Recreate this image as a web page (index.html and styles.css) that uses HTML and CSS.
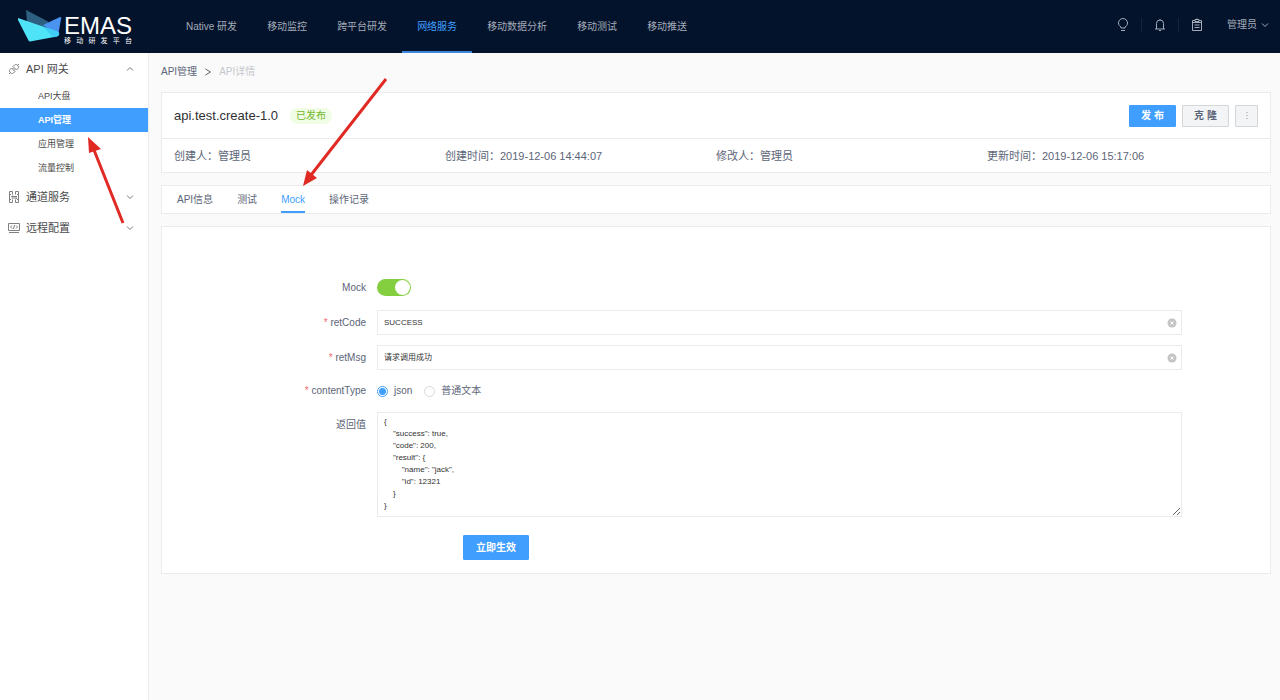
FILE: index.html
```html
<!DOCTYPE html>
<html lang="zh-CN">
<head>
<meta charset="utf-8">
<meta name="viewport" content="width=device-width, initial-scale=1">
<title>EMAS 移动研发平台</title>
<link rel="stylesheet" href="styles.css">
</head>
<body>
<header class="topbar">
  <a class="brand" href="#">
    <svg class="brand-mark" viewBox="0 0 44 34" aria-hidden="true">
      <path d="M8 0Q9 0 10 1L31 12 26 18 9 12Z" fill="#2c5f80"/>
      <path d="M42 7Q44 7 43 9L40 26 25 15Z" fill="#4a93f0"/>
      <path d="M0 8 38 21Q42 22 41 25L39 26.500 12 31.500Q11 31.500 10.500 30.500L0 10Z" fill="#4fe3f7"/>
      <path d="M25 16.500 38 21Q42 22 41 25L39 26.500 35 27.300Z" fill="#3fcdf5"/>
    </svg>
    <span class="brand-text">
      <span class="brand-name">EMAS</span>
      <span class="brand-sub">移动研发平台</span>
    </span>
  </a>
  <nav class="topnav">
    <a href="#">Native 研发</a>
    <a href="#">移动监控</a>
    <a href="#">跨平台研发</a>
    <a href="#" class="active">网络服务</a>
    <a href="#">移动数据分析</a>
    <a href="#">移动测试</a>
    <a href="#">移动推送</a>
  </nav>
  <div class="tools">
    <button class="tool" aria-label="提示"><svg viewBox="0 0 14 14"><path d="M5 10V9C3.500 8 2.500 7 2.500 5a4.500 4.500 0 0 1 9 0c0 2-1 3-2.500 4v1ZM5 12.500h4"/></svg></button>
    <button class="tool" aria-label="通知"><svg viewBox="0 0 14 14"><path d="M3.500 11V5.500a3.500 3.500 0 0 1 7 0V11M2 11h10M7 2V1M6 12.500h2"/></svg></button>
    <button class="tool" aria-label="任务"><svg viewBox="0 0 14 14"><path d="M5 2.500H2.500v10h9v-10H9M5 1.500h4v2H5ZM2.500 4.500h9M4.500 7h5M4.500 9.500h5M7 .5v1"/></svg></button>
    <button class="user">管理员<svg class="chev" viewBox="0 0 8 8"><path d="M1 2.500 4 5.500 7 2.500"/></svg></button>
  </div>
</header>
<div class="shell">
  <aside class="sidebar">
    <button class="group">
      <svg class="group-icon" viewBox="0 0 12 12"><path d="M1 11 2.500 9.500M3.500 5 7 8.500 5.500 10C4.500 11 3.300 10.600 2.400 9.700S1 7.500 2 6.500ZM5 3.500 6.500 2C7.500 1 8.700 1.400 9.600 2.300S11 4.500 10 5.500L8.500 7ZM9.500 2.500 11 1M4.500 6 5.700 4.800M6 7.500 7.200 6.300"/></svg>
      <span>API 网关</span>
      <svg class="chev" viewBox="0 0 8 8"><path d="M1 5.500 4 2.500 7 5.500"/></svg>
    </button>
    <nav class="submenu">
      <a href="#">API大盘</a>
      <a href="#" class="active">API管理</a>
      <a href="#">应用管理</a>
      <a href="#">流量控制</a>
    </nav>
    <button class="group">
      <svg class="group-icon" viewBox="0 0 12 12"><path d="M4.500.5h-3v11h3v-3M4.500.5v3M7.500 11.500h3V.5h-3v3M7.500 8.500v3M1.500 3.500h1.500M9 3.500h1.500M1.500 8.500h1.500M9 8.500h1.500M3.500 5.500H9M4.500 4.500 3.500 5.500M3.500 7H9L7.800 8.200"/></svg>
      <span>通道服务</span>
      <svg class="chev" viewBox="0 0 8 8"><path d="M1 2.500 4 5.500 7 2.500"/></svg>
    </button>
    <button class="group">
      <svg class="group-icon" viewBox="0 0 12 12"><path d="M.5 1.500h11v7H.5ZM1 10.500h10M4 3.500 2.500 5 4 6.500M8 3.500 9.500 5 8 6.500M6.600 3 5.400 7"/></svg>
      <span>远程配置</span>
      <svg class="chev" viewBox="0 0 8 8"><path d="M1 2.500 4 5.500 7 2.500"/></svg>
    </button>
  </aside>
  <main class="main">
    <nav class="crumbs">
      <a href="#">API管理</a>
      <svg class="crumb-sep" viewBox="0 0 8 8"><path d="M1.500 1 6.500 4 1.500 7"/></svg>
      <span>API详情</span>
    </nav>
    <section class="card">
      <div class="card-head">
        <h1>api.test.create-1.0</h1>
        <span class="badge">已发布</span>
        <div class="actions">
          <button class="btn primary">发 布</button>
          <button class="btn">克 隆</button>
          <button class="btn more" aria-label="更多"><svg viewBox="0 0 4 10"><path d="M1.500 1h1v1h-1zM1.500 4h1v1h-1zM1.500 7h1v1h-1z"/></svg></button>
        </div>
      </div>
      <div class="info">
        <span>创建人：管理员</span>
        <span>创建时间：2019-12-06 14:44:07</span>
        <span>修改人：管理员</span>
        <span>更新时间：2019-12-06 15:17:06</span>
      </div>
    </section>
    <nav class="card tabs">
      <a href="#">API信息</a>
      <a href="#">测试</a>
      <a href="#" class="active">Mock</a>
      <a href="#">操作记录</a>
    </nav>
    <form class="card form">
      <label class="label" for="mock">Mock</label>
      <div class="field"><input class="switch" type="checkbox" id="mock" checked></div>

      <label class="label required" for="code">retCode</label>
      <div class="field box">
        <input class="text" id="code" type="text" value="SUCCESS">
        <button class="clear" type="button" aria-label="清除"><svg viewBox="0 0 10 10"><circle cx="5" cy="5" r="4.500"/><path d="M3.500 3.500 6.500 6.500M6.500 3.500 3.500 6.500"/></svg></button>
      </div>

      <label class="label required" for="msg">retMsg</label>
      <div class="field box">
        <input class="text" id="msg" type="text" value="请求调用成功">
        <button class="clear" type="button" aria-label="清除"><svg viewBox="0 0 10 10"><circle cx="5" cy="5" r="4.500"/><path d="M3.500 3.500 6.500 6.500M6.500 3.500 3.500 6.500"/></svg></button>
      </div>

      <span class="label required" id="ctype">contentType</span>
      <div class="field radios" role="radiogroup" aria-labelledby="ctype">
        <label><input type="radio" name="ctype" checked>json</label>
        <label><input type="radio" name="ctype">普通文本</label>
      </div>

      <label class="label" for="result">返回值</label>
      <textarea class="area" id="result">{
    "success": true,
    "code": 200,
    "result": {
        "name": "jack",
        "id": 12321
    }
}</textarea>

      <div class="submit"><button class="btn primary large" type="button">立即生效</button></div>
    </form>
  </main>
</div>
<svg class="marks" width="400" height="240" viewBox="0 0 400 240" aria-hidden="true">
  <path class="shaft" d="M386 79 311 175M123 223 94 150"/>
  <path class="head" d="M303 186 307 170 317 178ZM88 137 89 153 101 149Z"/>
</svg>
</body>
</html>
```
FILE: styles.css
```css
* { box-sizing: border-box; }

body {
  margin: 0;
  min-height: 100vh;
  display: flex;
  flex-direction: column;
  background: #fafafa;
  color: #5c6577;
  font: 10px/16px "Liberation Sans", "Noto Sans CJK SC", sans-serif;
}

a { color: inherit; text-decoration: none; }
button, input, textarea { font: inherit; color: inherit; margin: 0; }
button { border: 0; padding: 0; background: none; cursor: pointer; }
svg { fill: none; stroke: currentColor; flex: none; }

.topbar {
  display: flex;
  align-items: stretch;
  height: 53px;
  background: #03132c;
  color: #a3abb8;
}

.brand {
  display: flex;
  align-items: center;
  width: 171px;
  padding-left: 18px;
  gap: 2px;
  color: #fff;
}
.brand-mark { width: 44px; height: 34px; stroke: none; }
.brand-text { display: flex; flex-direction: column; padding-top: 6px; }
.brand-name { font-size: 24px; line-height: 22px; }
.brand-sub { font-size: 7px; line-height: 8px; text-align-last: justify; }

.topnav { display: flex; }
.topnav a {
  display: flex;
  align-items: center;
  padding: 2px 15px 0;
  border-bottom: 2px solid transparent;
}
.topnav .active { color: #409eff; border-color: #3c86dc; }

.tools { display: flex; align-items: center; margin-left: auto; padding: 0 11px 3px 0; }
.tool {
  display: flex;
  justify-content: center;
  width: 37px;
  height: 14px;
}
.tool + .tool { border-left: 1px solid #14243b; }
.tool svg { width: 14px; height: 14px; }
.user { display: flex; align-items: center; gap: 4px; padding-left: 12px; }
.chev { width: 8px; height: 8px; }

.shell { display: flex; flex: 1; }

.sidebar {
  width: 149px;
  flex: none;
  background: #fff;
  border-right: 1px solid #ebebeb;
  color: #4a4a4a;
}
.group {
  display: flex;
  align-items: center;
  width: 100%;
  height: 31px;
  padding: 0 14px 0 8px;
  gap: 6px;
  font-size: 11px;
}
.group-icon { width: 12px; height: 12px; stroke: #808080; }
.group .chev { margin-left: auto; stroke: #777; }
.submenu { display: flex; flex-direction: column; padding-bottom: 1px; }
.submenu a { padding-left: 38px; font-size: 9px; line-height: 24px; }
.submenu .active { background: #409eff; color: #fff; font-weight: bold; }

.main {
  flex: 1;
  min-width: 0;
  display: flex;
  flex-direction: column;
  gap: 12px;
  padding: 11px 9px 12px 12px;
}

.crumbs { display: flex; align-items: center; gap: 7px; }
.crumbs span { color: #c5c8ce; }
.crumb-sep { width: 8px; height: 8px; }

.card { background: #fff; border: 1px solid #ebebeb; }

.card-head {
  display: flex;
  align-items: center;
  min-height: 46px;
  padding: 0 12px;
  border-bottom: 1px solid #ebebeb;
}
.card-head h1 { margin: 0; font-size: 13px; font-weight: normal; color: #303133; }
.badge {
  margin-left: 12px;
  padding: 0 6px;
  border-radius: 8px;
  background: #f0fce4;
  color: #72b82f;
}
.actions { display: flex; gap: 6px; margin-left: auto; }
.btn {
  display: flex;
  align-items: center;
  justify-content: center;
  min-width: 47px;
  height: 22px;
  border: 1px solid #d4d6da;
  border-radius: 1px;
  background: #f3f4f5;
  font-weight: bold;
}
.btn.primary { background: #409eff; border-color: #409eff; color: #fff; }
.btn.more { min-width: 23px; }
.btn.more svg { width: 4px; height: 10px; fill: #909399; stroke: none; }
.btn.large { min-width: 66px; height: 25px; }

.info {
  display: grid;
  grid-template-columns: repeat(4, 1fr);
  padding: 9px 12px 8px;
  font-size: 11px;
}

.tabs { display: flex; gap: 24px; padding: 0 15px; }
.tabs a { padding: 6px 0 3px; border-bottom: 2px solid transparent; }
.tabs .active { color: #409eff; border-color: #409eff; }

.form {
  display: grid;
  grid-template-columns: 116px 1fr;
  gap: 10px 11px;
  padding: 48px 88px 13px;
}
.label { text-align: right; line-height: 25px; }
.required::before { content: "* "; color: #f56c6c; }
.field { display: flex; align-items: center; min-height: 25px; }

.switch {
  appearance: none;
  display: flex;
  justify-content: flex-end;
  width: 34px;
  height: 17px;
  padding: 1px;
  border-radius: 9px;
  background: #84cf3f;
}
.switch::before {
  content: "";
  width: 15px;
  height: 15px;
  border-radius: 50%;
  background: #fff;
}
.switch:not(:checked) { justify-content: flex-start; background: #c0c4cc; }

.box { border: 1px solid #ebebeb; padding: 0 4px 0 6px; }
.text {
  flex: 1;
  min-width: 0;
  border: 0;
  padding: 0;
  outline: 0;
  background: none;
  color: #333;
  font-size: 8px;
}
.clear { display: flex; }
.clear svg { width: 10px; height: 10px; }
.clear circle { fill: #c4c4c4; stroke: none; }
.clear path { stroke: #fff; }

.radios { min-height: 22px; gap: 12px; }
.radios label { display: flex; align-items: center; gap: 6px; }
.radios input {
  appearance: none;
  width: 11px;
  height: 11px;
  border: 1px solid #d5d8de;
  border-radius: 50%;
  background: #fff;
}
.radios input:checked { border-color: #409eff; background: radial-gradient(#409eff 3px, #fff 4px); }
.form > span.label { line-height: 22px; }

.area {
  width: 100%;
  height: 105px;
  padding: 3px 6px;
  border: 1px solid #ebebeb;
  outline: 0;
  resize: vertical;
  color: #333;
  font-size: 8px;
  line-height: 12px;
}
.submit { grid-column: 2; padding: 8px 0 0 86px; }

.marks { position: absolute; top: 0; left: 0; pointer-events: none; }
.shaft { stroke: #e02a24; stroke-width: 3; }
.head { fill: #e02a24; stroke: none; }
```
